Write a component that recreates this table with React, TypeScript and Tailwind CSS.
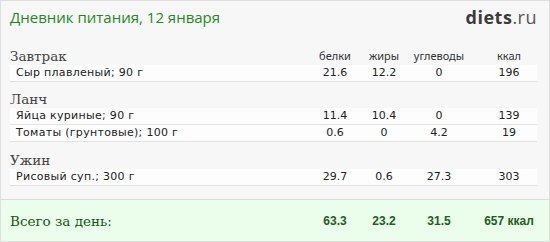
import React from "react";

type Row = { name: string; b: string; f: string; c: string; k: string };
type Section = { title: string; h: string; rows: Row[] };

const sections: Section[] = [
  { title: "Завтрак", h: "h-[25px]", rows: [{ name: "Сыр плавленый; 90 г", b: "21.6", f: "12.2", c: "0", k: "196" }] },
  {
    title: "Ланч",
    h: "h-[26px]",
    rows: [
      { name: "Яйца куриные; 90 г", b: "11.4", f: "10.4", c: "0", k: "139" },
      { name: "Томаты (грунтовые); 100 г", b: "0.6", f: "0", c: "4.2", k: "19" },
    ],
  },
  { title: "Ужин", h: "h-[27px]", rows: [{ name: "Рисовый суп.; 300 г", b: "29.7", f: "0.6", c: "27.3", k: "303" }] },
];

const serif = { fontFamily: '"DejaVu Serif", "Liberation Serif", serif' };
const sans = { fontFamily: '"DejaVu Sans", Verdana, sans-serif' };

function Cols({ b, f, c, k, cls }: { b: string; f: string; c: string; k: string; cls: string }) {
  return (
    <div className={`flex ${cls}`}>
      <div className="w-[50px] text-center">{b}</div>
      <div className="w-[48px] text-center">{f}</div>
      <div className="w-[62px] text-center">{c}</div>
      <div className="w-[67px] pl-[11px] text-center">{k}</div>
    </div>
  );
}

export default function App() {
  return (
    <div className="w-[550px] h-[242px] border border-[#dedede] bg-[#f7f7f7] flex flex-col overflow-hidden">
      <div className="h-[39px] pl-[9px] pr-[12px] pt-[6px] flex justify-between items-start">
        <div className="text-[15px] leading-[20px] text-[#1d8c1d]" style={{ fontFamily: '"Open Sans", "Noto Sans", sans-serif' }}>
          Дневник питания, 12 января
        </div>
        <div className="text-[18px] leading-[20px] tracking-[0.5px]" style={{ fontFamily: '"Open Sans", "Noto Sans", sans-serif' }}>
          <span className="font-bold text-[#3b3b3b]">diets</span>
          <span className="text-[#555]">.ru</span>
        </div>
      </div>
      <div className="pl-[9px] pr-[12px] flex flex-col">
        {sections.map((s, i) => (
          <div key={s.title} className="flex flex-col">
            <div className={`${s.h} flex items-end justify-between`}>
              <div className="text-[13.5px] leading-[16px] text-[#444] pb-[1px]" style={serif}>
                {s.title}
              </div>
              {i === 0 && (
                <Cols b="белки" f="жиры" c="углеводы" k="ккал" cls="text-[11px] leading-[16px] text-[#333] pb-[1px]" />
              )}
            </div>
            {s.rows.map((r) => (
              <div
                key={r.name}
                className="h-[17px] bg-[#fdfdfd] border-b border-[#e2e2e2] flex items-center justify-between pl-[6px] text-[11px] leading-[16px] text-[#222]"
                style={sans}
              >
                <div className="tracking-[0.3px]">{r.name}</div>
                <Cols b={r.b} f={r.f} c={r.c} k={r.k} cls="" />
              </div>
            ))}
          </div>
        ))}
      </div>
      <div className="flex-1" />
      <div className="h-[42px] border-t border-[#dcdcdc] bg-[#ebfdeb] pl-[9px] pr-[12px] flex items-center justify-between">
        <div className="text-[13.5px] leading-[16px] text-[#0f5a0f] pt-[1px]" style={serif}>
          Всего за день:
        </div>
        <div style={{ fontFamily: '"Liberation Sans", Arial, sans-serif' }}>
          <Cols b="63.3" f="23.2" c="31.5" k="657 ккал" cls="text-[12px] font-bold text-[#1e5e1e]" />
        </div>
      </div>
    </div>
  );
}
